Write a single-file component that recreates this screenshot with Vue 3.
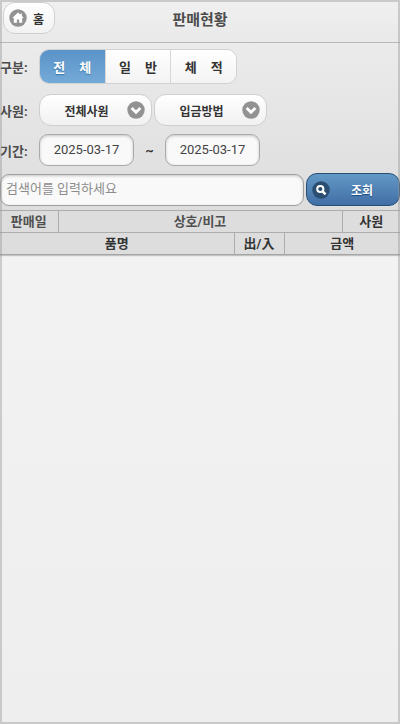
<script setup>
import { ref } from 'vue'

const kinds = [
  { value: 'all', first: '전', last: '체' },
  { value: 'normal', first: '일', last: '반' },
  { value: 'volume', first: '체', last: '적' },
]
const kind = ref('all')
const employee = ref('전체사원')
const payment = ref('입금방법')
const from = ref('2025-03-17')
const to = ref('2025-03-17')
const keyword = ref('')
</script>

<template>
  <div class="page">
    <header class="header">
      <a class="home" href="#">
        <svg class="icon" viewBox="0 0 18 18" aria-hidden="true">
          <circle cx="9" cy="9" r="8.7" fill="#929292" />
          <path d="M9 3.4 3.2 9h1.6v4.7h3.1v-3.2h2.2v3.2h3.1V9h1.6L12.9 7.1V4.4h-1.5v1.3z" fill="#fff" />
        </svg>
        <span>홈</span>
      </a>
      <h1 class="title">판매현황</h1>
    </header>

    <form class="filters" @submit.prevent>
      <div class="row kind-row">
        <span class="label">구분:</span>
        <div class="segments" role="group" aria-label="구분">
          <button
            v-for="k in kinds"
            :key="k.value"
            type="button"
            class="segment"
            :class="{ active: kind === k.value }"
            @click="kind = k.value"
          >
            <span>{{ k.first }}</span><span>{{ k.last }}</span>
          </button>
        </div>
      </div>

      <div class="row select-row">
        <label class="label" for="employee">사원:</label>
        <div class="picker">
          <select id="employee" v-model="employee">
            <option>전체사원</option>
          </select>
          <svg class="icon arrow" viewBox="0 0 18 18" aria-hidden="true">
            <circle cx="9" cy="9" r="8.7" fill="#929292" />
            <path d="M4.6 7 9 11.2 13.4 7" fill="none" stroke="#fff" stroke-width="2.8" />
          </svg>
        </div>
        <div class="picker">
          <select v-model="payment" aria-label="입금방법">
            <option>입금방법</option>
          </select>
          <svg class="icon arrow" viewBox="0 0 18 18" aria-hidden="true">
            <circle cx="9" cy="9" r="8.7" fill="#929292" />
            <path d="M4.6 7 9 11.2 13.4 7" fill="none" stroke="#fff" stroke-width="2.8" />
          </svg>
        </div>
      </div>

      <div class="row date-row">
        <label class="label" for="from">기간:</label>
        <input id="from" v-model="from" class="date" type="text" />
        <span class="tilde">~</span>
        <input v-model="to" class="date" type="text" aria-label="종료일" />
      </div>

      <div class="search-row">
        <input v-model="keyword" class="keyword" type="text" placeholder="검색어를 입력하세요" aria-label="검색어" />
        <button class="submit" type="submit">
          <svg class="icon" viewBox="0 0 18 18" aria-hidden="true">
            <circle cx="9" cy="9" r="8.7" fill="#2b4d70" />
            <circle cx="8.3" cy="8" r="3.1" fill="none" stroke="#fff" stroke-width="2" />
            <path d="m10.6 10.4 3 3" stroke="#fff" stroke-width="2.6" />
          </svg>
          <span>조회</span>
        </button>
      </div>
    </form>

    <table class="list">
      <colgroup>
        <col class="c-date" /><col class="c-name" /><col class="c-io" /><col class="c-amount" /><col class="c-staff" />
      </colgroup>
      <thead>
        <tr>
          <th class="light">판매일</th>
          <th class="light" colspan="3">상호/비고</th>
          <th>사원</th>
        </tr>
        <tr>
          <th colspan="2">품명</th>
          <th>出/入</th>
          <th colspan="2">금액</th>
        </tr>
      </thead>
    </table>
  </div>
</template>

<style>
body {
  margin: 0;
}
</style>

<style scoped>
.page {
  box-sizing: border-box;
  min-height: 100vh;
  background: linear-gradient(#f5f5f5, #eeeeee);
  color: #333;
  font-family: Roboto, "Noto Sans CJK KR", sans-serif;
  font-size: 13px;
}
.page::after {
  content: "";
  position: fixed;
  inset: 0;
  border: 2px solid rgba(150, 150, 150, 0.42);
  pointer-events: none;
}
.page * {
  box-sizing: border-box;
}
button,
input,
select {
  margin: 0;
  font-family: inherit;
  color: inherit;
}
.icon {
  flex: none;
  width: 18px;
  height: 18px;
}
.header {
  display: grid;
  grid-template-columns: 1fr auto 1fr;
  align-items: center;
  height: 43px;
  padding: 0 3px;
  border-bottom: 1px solid #b8b8b8;
  background: linear-gradient(#f0f0f0, #e9e9e9);
  box-shadow: 0 0 1px 1px rgba(0, 0, 0, 0.1);
}
.home {
  display: flex;
  align-items: center;
  gap: 6px;
  justify-self: start;
  align-self: start;
  width: 52px;
  height: 32px;
  margin-top: 2px;
  padding: 0 5px;
  border: 1px solid #d0d0d0;
  border-radius: 12px;
  background: linear-gradient(#fff, #f2f2f2);
  color: #333;
  font-size: 12px;
  font-weight: 700;
  text-decoration: none;
}
.title {
  margin: 0;
  padding-bottom: 2px;
  color: #4c4c4c;
  font-size: 15px;
  font-weight: 700;
  line-height: 20px;
}
.filters {
  padding: 6px 0 4px;
  background: linear-gradient(#ebebeb, #dddddd);
}
.row {
  display: flex;
  align-items: center;
}
.label {
  width: 39px;
  color: #4c4c4c;
  font-weight: 700;
}
.segments {
  display: flex;
  overflow: hidden;
  width: 198px;
  height: 35px;
  border: 1px solid #d2d2d2;
  border-radius: 10px;
}
.segment {
  display: flex;
  flex: 1;
  align-items: center;
  justify-content: center;
  gap: 14px;
  padding: 0;
  border: 0;
  border-left: 1px solid #d8d8d8;
  background: linear-gradient(#fff, #f3f3f3);
  font-size: 13px;
  font-weight: 700;
}
.segment:first-child {
  border-left: 0;
}
.segment.active {
  background: linear-gradient(#5a93c8, #74aad8);
  color: #fff;
  text-shadow: 0 1px 1px #3373a5;
}
.select-row {
  gap: 2px;
  margin-top: 10px;
}
.select-row .label {
  width: 37px;
}
.picker {
  position: relative;
  width: 113px;
  height: 32px;
}
.picker select {
  width: 100%;
  height: 100%;
  padding: 4px 22px 0 4px;
  border: 1px solid #cfcfcf;
  border-radius: 12px;
  background: linear-gradient(#fff, #f1f1f1);
  appearance: none;
  font-size: 12px;
  font-weight: 700;
  text-align: center;
  text-align-last: center;
}
.arrow {
  position: absolute;
  top: 7px;
  right: 7px;
}
.date-row {
  margin-top: 8px;
}
.date {
  width: 95px;
  height: 32px;
  padding: 0 4px 2px;
  border: 1px solid #aaa;
  border-radius: 9px;
  background: #f9f9f9;
  box-shadow: inset 0 1px 3px rgba(0, 0, 0, 0.2);
  color: #444;
  font-size: 13px;
  text-align: center;
}
.tilde {
  width: 31px;
  text-align: center;
  font-weight: 700;
}
.search-row {
  display: flex;
  align-items: center;
  gap: 2px;
  margin-top: 7px;
}
.keyword {
  flex: 1;
  min-width: 0;
  height: 32px;
  padding: 0 5px 2px;
  border: 1px solid #9f9f9f;
  border-radius: 9px;
  background: #f9f9f9;
  box-shadow: inset 0 1px 3px rgba(0, 0, 0, 0.2);
  font-size: 13px;
}
.keyword::placeholder {
  color: #8c8c8c;
}
.submit {
  display: flex;
  align-items: center;
  width: 94px;
  height: 33px;
  padding: 0 5px;
  border: 1px solid #264f78;
  border-radius: 11px;
  background: linear-gradient(#6299c6, #426ea6);
  color: #fff;
  font-size: 12px;
  font-weight: 700;
  text-shadow: 0 1px 1px #194b7e;
}
.submit span {
  flex: 1;
}
.list {
  width: 100%;
  border-collapse: collapse;
  table-layout: fixed;
  border-bottom: 1px solid #a5a5a5;
  background: #dddddd;
  box-shadow: 0 1px 1px rgba(0, 0, 0, 0.2);
}
.list th {
  height: 22px;
  padding: 0;
  border-top: 1px solid #adadad;
  border-left: 1px solid #adadad;
  color: #333;
  font-size: 13px;
  font-weight: 700;
  line-height: 20px;
}
.list th:first-child {
  border-left: 0;
}
.list th.light {
  color: #505050;
}
.c-date {
  width: 14.5%;
}
.c-name {
  width: 44%;
}
.c-io {
  width: 12.5%;
}
.c-amount {
  width: 14.5%;
}
.c-staff {
  width: 14.5%;
}
</style>
